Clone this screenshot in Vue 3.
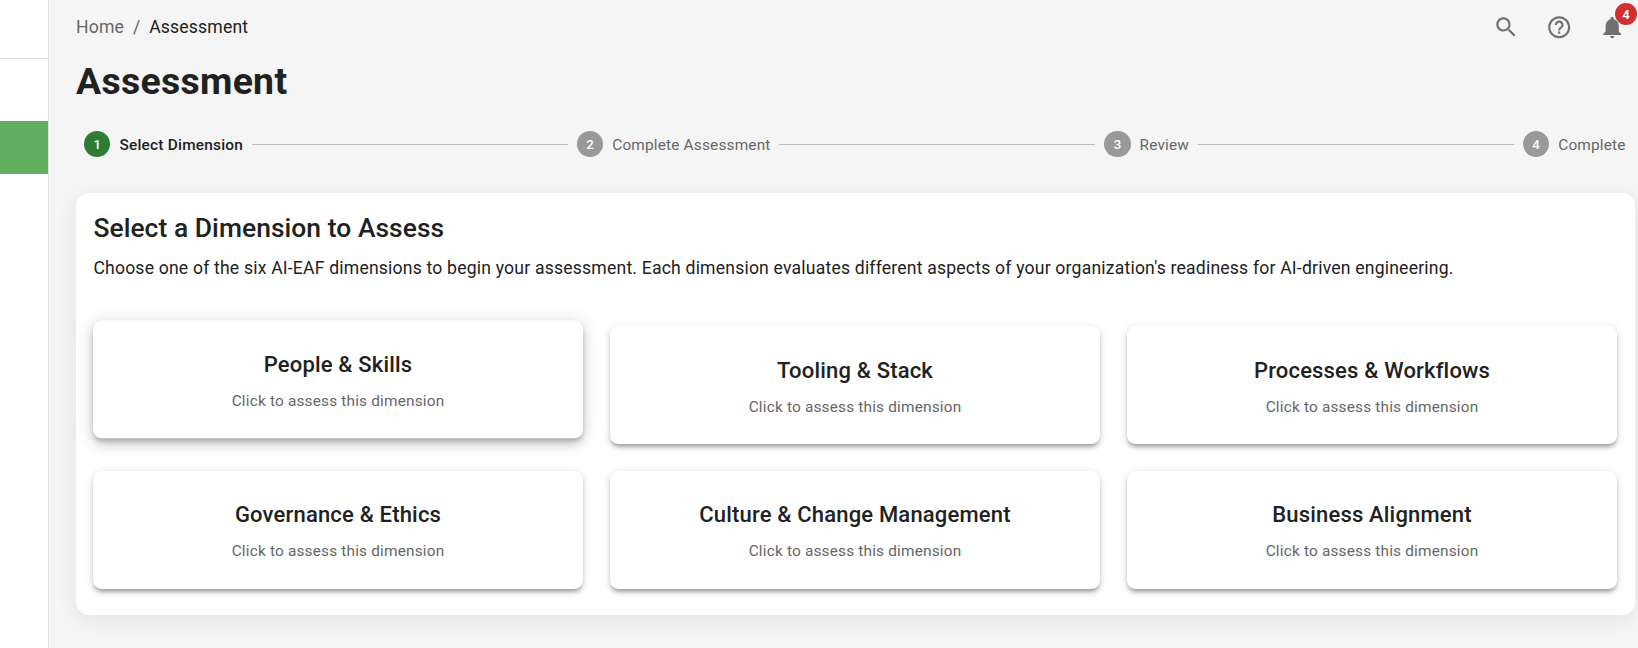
<script setup>
const steps = ['Select Dimension', 'Complete Assessment', 'Review', 'Complete']
const dimensions = [
  'People & Skills',
  'Tooling & Stack',
  'Processes & Workflows',
  'Governance & Ethics',
  'Culture & Change Management',
  'Business Alignment',
]
</script>

<template>
  <div class="shell">
    <aside class="sidebar">
      <div class="sidebar-head"></div>
      <div class="sidebar-active"></div>
    </aside>
    <main class="main">
      <header class="topbar">
        <nav class="crumbs">
          <span class="crumb-link">Home</span>
          <span class="crumb-sep">/</span>
          <span>Assessment</span>
        </nav>
        <div class="actions">
          <svg class="icon" viewBox="0 0 24 24"><path d="M15.5 14h-.79l-.28-.27C15.41 12.59 16 11.11 16 9.5 16 5.91 13.09 3 9.5 3S3 5.91 3 9.5 5.91 16 9.5 16c1.61 0 3.09-.59 4.23-1.57l.27.28v.79l5 4.99L20.49 19l-4.99-5zm-6 0C7.01 14 5 11.99 5 9.5S7.01 5 9.5 5 14 7.01 14 9.5 11.99 14 9.5 14z" /></svg>
          <svg class="icon" viewBox="0 0 24 24"><path d="M11 18h2v-2h-2v2zm1-16C6.48 2 2 6.48 2 12s4.48 10 10 10 10-4.48 10-10S17.52 2 12 2zm0 18c-4.41 0-8-3.59-8-8s3.59-8 8-8 8 3.59 8 8-3.59 8-8 8zm0-14c-2.21 0-4 1.79-4 4h2c0-1.1.9-2 2-2s2 .9 2 2c0 2-3 1.75-3 5h2c0-2.25 3-2.5 3-5 0-2.21-1.79-4-4-4z" /></svg>
          <div class="bell">
            <svg class="icon" viewBox="0 0 24 24"><path d="M12 22c1.1 0 2-.9 2-2h-4c0 1.1.89 2 2 2zm6-6v-5c0-3.07-1.64-5.64-4.5-6.32V4c0-.83-.67-1.5-1.5-1.5s-1.5.67-1.5 1.5v.68C7.63 5.36 6 7.92 6 11v5l-2 2v1h16v-1l-2-2z" /></svg>
            <span class="badge">4</span>
          </div>
        </div>
      </header>
      <h1 class="title">Assessment</h1>
      <div class="stepper">
        <template v-for="(label, i) in steps" :key="label">
          <div v-if="i > 0" class="connector"></div>
          <div class="step" :class="{ active: i === 0 }">
            <span class="dot">{{ i + 1 }}</span>
            <span class="step-label">{{ label }}</span>
          </div>
        </template>
      </div>
      <section class="panel">
        <h2 class="panel-title">Select a Dimension to Assess</h2>
        <p class="panel-text">Choose one of the six AI-EAF dimensions to begin your assessment. Each dimension evaluates different aspects of your organization's readiness for AI-driven engineering.</p>
        <div class="grid">
          <article v-for="(name, i) in dimensions" :key="name" class="card" :class="{ raised: i === 0 }">
            <h3 class="card-title">{{ name }}</h3>
            <p class="card-text">Click to assess this dimension</p>
          </article>
        </div>
      </section>
    </main>
  </div>
</template>

<style>
body {
  margin: 0;
  background: #f5f5f5;
}
</style>

<style scoped>
.shell {
  display: flex;
  box-sizing: border-box;
  width: 100%;
  height: 648px;
  overflow: hidden;
  background: #f5f5f5;
  color: #212121;
  font-family: Roboto, "Liberation Sans", sans-serif;
}
h1, h2, h3, p { margin: 0; }
.sidebar {
  flex: none;
  width: 48px;
  background: #fff;
  border-right: 1px solid #e0e0e0;
}
.sidebar-head {
  height: 58px;
  border-bottom: 1px solid #e0e0e0;
}
.sidebar-active {
  margin-top: 62px;
  height: 53px;
  background: #60ad5e;
}
.main {
  flex: 1;
  min-width: 0;
  padding: 0 3px 0 27px;
}
.topbar {
  display: flex;
  justify-content: space-between;
  height: 54px;
}
.crumbs {
  display: flex;
  height: 54px;
  align-items: center;
  font-size: 17.6px;
  letter-spacing: 0.18px;
}
.crumb-link { color: #666; }
.crumb-sep { color: #666; margin: 0 8.8px; }
.actions {
  display: flex;
  gap: 26.6px;
  margin: 14px 9.6px 0 0;
  height: 26.4px;
}
.icon {
  display: block;
  width: 26.4px;
  height: 26.4px;
  fill: #707070;
}
.bell { position: relative; }
.badge {
  position: absolute;
  top: -11px;
  left: 16px;
  width: 22px;
  height: 22px;
  border-radius: 11px;
  background: #d32f2f;
  color: #fff;
  font-size: 13.2px;
  font-weight: 600;
  line-height: 23px;
  text-align: center;
}
.title {
  font-size: 37.4px;
  font-weight: 700;
  line-height: 54px;
  letter-spacing: 0.3px;
}
.stepper {
  display: flex;
  align-items: center;
  margin: 23px 9.4px 35.6px 8px;
  height: 26.4px;
}
.step {
  display: flex;
  align-items: center;
  gap: 9px;
  color: #666;
}
.dot {
  width: 26.4px;
  height: 26.4px;
  border-radius: 50%;
  background: #999;
  color: #fff;
  font-size: 13.2px;
  font-weight: 500;
  line-height: 27px;
  text-align: center;
}
.step-label {
  padding-top: 2px;
  font-size: 15.4px;
  letter-spacing: 0.175px;
  white-space: nowrap;
}
.active { color: #212121; }
.active .dot { background: #2e7d32; }
.active .step-label { font-weight: 500; letter-spacing: 0.23px; }
.connector {
  flex: 1;
  height: 1px;
  margin: 0 8.8px;
  background: #bdbdbd;
}
.panel {
  box-sizing: border-box;
  height: 422px;
  padding: 18px 18px 17px 17px;
  border-radius: 13.2px;
  background: #fff;
  box-shadow: 0 4.4px 22px rgba(0, 0, 0, 0.08);
}
.panel-title {
  padding-left: 0.4px;
  font-size: 26.4px;
  font-weight: 500;
  line-height: 35px;
  letter-spacing: 0.06px;
}
.panel-text {
  margin-top: 9px;
  padding-left: 0.4px;
  font-size: 17.6px;
  line-height: 27px;
  letter-spacing: 0.193px;
}
.grid {
  display: grid;
  grid-template-columns: repeat(3, 1fr);
  gap: 26.4px 27px;
  margin-top: 44.2px;
}
.card {
  box-sizing: border-box;
  height: 118px;
  padding-top: 26.8px;
  border-radius: 8.8px;
  background: #fff;
  text-align: center;
  box-shadow: 0 3.3px 3.3px -2.2px rgba(0, 0, 0, 0.2), 0 3.3px 4.4px rgba(0, 0, 0, 0.14), 0 1.1px 8.8px rgba(0, 0, 0, 0.12);
}
.raised {
  transform: translateY(-5.7px);
  box-shadow: 0 3.3px 5.5px -1.1px rgba(0, 0, 0, 0.2), 0 6.6px 11px rgba(0, 0, 0, 0.14), 0 1.1px 19.8px rgba(0, 0, 0, 0.12);
}
.card-title {
  font-size: 22px;
  font-weight: 500;
  line-height: 35px;
  letter-spacing: 0.18px;
}
.card-text {
  margin-top: 8px;
  color: #666;
  font-size: 15.4px;
  line-height: 22px;
  letter-spacing: 0.18px;
}
</style>
